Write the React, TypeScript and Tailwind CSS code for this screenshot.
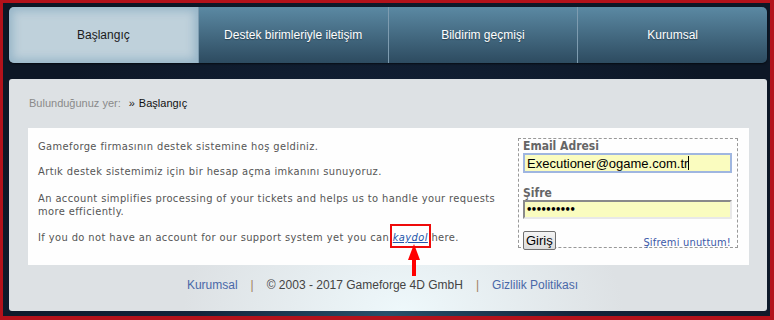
import React from 'react';

const tabs = ['Başlangıç', 'Destek birimleriyle iletişim', 'Bildirim geçmişi', 'Kurumsal'];

export default function App() {
  return (
    <div className="w-[774px] h-[320px] bg-[#b3121b] pl-[3px] pr-[4px] pt-[3px] pb-[4px] overflow-hidden">
      <div className="h-full bg-[radial-gradient(ellipse_at_50%_100%,#27506a_0%,#13233a_35%,#0d1726_80%)] pl-[6px] pr-[3px] pt-[4px] pb-[5px] flex flex-col">
        {/* Menü */}
        <div className="flex h-[56px] rounded-[5px] overflow-hidden shadow-[0_1px_2px_rgba(0,0,0,0.6)] font-['Liberation_Sans',Arial,sans-serif] text-[12px]">
          {tabs.map((t, i) => (
            <div
              key={t}
              className={
                i === 0
                  ? 'flex-1 flex items-center justify-center bg-[#bfd1db] text-[#1b1b1b] shadow-[inset_0_0_9px_4px_rgba(120,160,185,0.55)]'
                  : 'flex-1 flex items-center justify-center bg-[linear-gradient(#5b89a3,#2d4b60)] text-white border-l border-[#7e9cb0] [text-shadow:0_1px_1px_rgba(0,0,0,0.35)]'
              }
            >
              {t}
            </div>
          ))}
        </div>

        {/* İçerik */}
        <div className="mt-[16px] flex-1 rounded-[3px] bg-[radial-gradient(ellipse_220px_140px_at_52%_100%,#eef8fb_0%,#dde1e4_100%)] px-[19px] pr-[18px] pt-[18px]">
          <div className="font-['Liberation_Sans',Arial,sans-serif] text-[11px] leading-[13px] text-[#8a8a8a] pl-[1px] flex items-center">
            <span>Bulunduğunuz yer:</span>
            <span className="ml-[8px] text-[#222]">»</span>
            <span className="ml-[4px] text-[#111]">Başlangıç</span>
          </div>

          <div className="mt-[18px] h-[137px] bg-[#fefefe] flex justify-between pl-[10px] pr-[11px] pt-[10px] font-['DejaVu_Sans_Condensed','DejaVu_Sans',sans-serif] text-[11px] leading-[13px] text-[#555]">
            <div className="pt-[2px] tracking-[0.4px]">
              <p>Gameforge firmasının destek sistemine hoş geldiniz.</p>
              <p className="mt-[12px]">Artık destek sistemimiz için bir hesap açma imkanını sunuyoruz.</p>
              <p className="mt-[14px]">
                An account simplifies processing of your tickets and helps us to handle your requests
                <br />
                more efficiently.
              </p>
              <p className="mt-[13px]">
                If you do not have an account for our support system yet you can{' '}
                <span className="relative">
                  <a className="italic text-[#2255aa] underline">kaydol</a>
                  <span className="absolute left-[-3px] right-[-3px] top-[-7px] bottom-[-4px] border-2 border-[#ee0a0a]" />
                  <svg className="absolute left-[15px] top-[13px]" width="12" height="32" viewBox="0 0 12 32">
                    <polygon points="6,0 12,16 0,16" fill="#f00" />
                    <rect x="4" y="14" width="4" height="18" fill="#f00" />
                  </svg>
                </span>{' '}
                here.
              </p>
            </div>

            {/* Giriş kutusu */}
            <div className="w-[220px] h-[110px] border border-dashed border-[#999] px-[4px] pt-[1px] shrink-0">
              <div className="font-bold text-[12px] leading-[13px] text-[#666]">Email Adresi</div>
              <div className="w-[209px] h-[20px] bg-[#fafcbf] border-2 border-[#9fb6e0] flex items-center pl-[2px] font-['Liberation_Sans',Arial,sans-serif] text-[13px] text-black">
                Executioner@ogame.com.tr<span className="inline-block w-[1px] h-[14px] bg-black" />
              </div>
              <div className="mt-[14px] font-bold text-[12px] leading-[13px] text-[#666]">Şifre</div>
              <div className="w-[209px] h-[19px] bg-[#fafcbf] border-2 border-t-[#8a8a8a] border-l-[#8a8a8a] border-r-[#e8e8e8] border-b-[#e8e8e8] flex items-center pl-[1px] text-[11px] text-black tracking-[-1.5px] font-bold">
                ••••••••••
              </div>
              <div className="mt-[12px] flex items-end justify-between">
                <button className="h-[19px] px-[2px] bg-[linear-gradient(#f4f4f4,#dcdcdc)] border border-[#707070] rounded-[2px] font-['Liberation_Sans',Arial,sans-serif] text-[13px] leading-[15px] text-black">
                  Giriş
                </button>
                <a className="text-[#3a58a8] text-[11px] leading-[13px] mr-[2px] mb-[1px] tracking-[0.2px]">Şifremi unuttum!</a>
              </div>
            </div>
          </div>

          <div className="mt-[11px] flex justify-center font-['Liberation_Sans',Arial,sans-serif] text-[12px] text-[#444] pr-[12px]">
            <a className="text-[#4a68a8]">Kurumsal</a>
            <span className="mx-[13px] text-[#a08060]">|</span>
            <span>© 2003 - 2017 Gameforge 4D GmbH</span>
            <span className="mx-[13px] text-[#a08060]">|</span>
            <a className="text-[#4a68a8]">Gizlilik Politikası</a>
          </div>
        </div>
      </div>
    </div>
  );
}
